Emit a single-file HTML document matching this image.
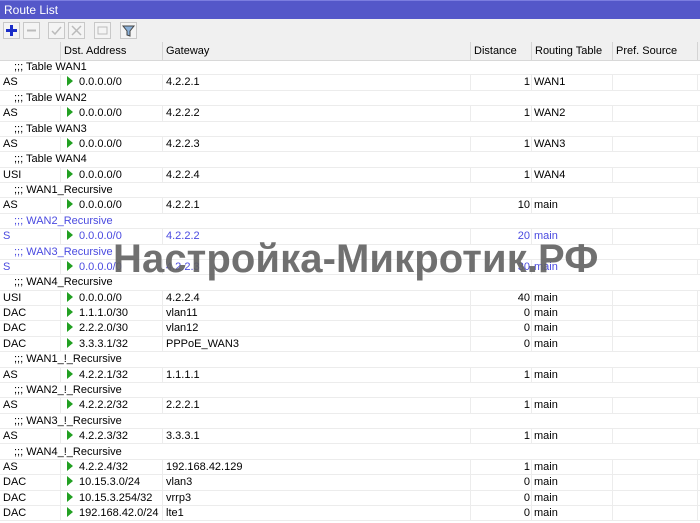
<!DOCTYPE html><html><head><meta charset="utf-8"><style>
body{margin:0;width:700px;height:523px;overflow:hidden;background:#fff;font-family:"Liberation Sans",sans-serif;font-size:11px;color:#000;position:relative}
.title{position:absolute;left:0;top:0;width:700px;height:19px;background:#5457c9;color:#fff;font-size:12px;line-height:19px;padding-left:4px;box-sizing:border-box;border-top:1px solid #7b7de0}
.tb{position:absolute;left:0;top:19px;width:700px;height:23px;background:#f0f0f0;border-bottom:1px solid #ddd}
.btn{position:absolute;top:3px;width:17px;height:17px;border:1px solid #c8c8c8;background:#f4f4f4;box-sizing:border-box}
.hdr{position:absolute;left:0;top:42px;width:700px;height:18px;background:#f0f0f0;border-bottom:1px solid #d8d8d8}
.hdr div{position:absolute;top:0;height:18px;line-height:18px;border-left:1px solid #d4d4d4;padding-left:3px;box-sizing:border-box}
.row{position:absolute;left:0;width:700px;height:15.38px;border-bottom:1px solid #ececec;box-sizing:border-box;line-height:15px}
.row span{position:absolute;top:0;white-space:nowrap}
.c{border-left:1px solid #ececec;height:15px}
.blue{color:#4a4ae0}
.tri{display:inline-block;width:0;height:0;border-left:6px solid #22a022;border-top:5px solid transparent;border-bottom:5px solid transparent;vertical-align:-1px;margin-right:6px}
.wm{position:absolute;left:113px;top:237px;font-size:40px;font-weight:bold;color:rgba(96,96,96,0.9);letter-spacing:0.1px;white-space:nowrap}
</style></head><body>
<div class="title">Route List</div>
<div class="tb">
<div class="btn" style="left:3px"><svg width="15" height="15"><path d="M7.5 2v11M2 7.5h11" stroke="#1a2cc8" stroke-width="3"/></svg></div>
<div class="btn" style="left:23px"><svg width="15" height="15"><path d="M3 7.5h9" stroke="#bbb" stroke-width="2"/></svg></div>
<div class="btn" style="left:48px"><svg width="15" height="15"><path d="M3 8l3 3 6-7" stroke="#bbb" stroke-width="1.5" fill="none"/></svg></div>
<div class="btn" style="left:68px"><svg width="15" height="15"><path d="M3 3l9 9M12 3l-9 9" stroke="#bbb" stroke-width="1.5"/></svg></div>
<div class="btn" style="left:94px"><svg width="15" height="15"><rect x="3" y="4" width="9" height="7" stroke="#bbb" fill="none"/></svg></div>
<div class="btn" style="left:120px"><svg width="15" height="15"><path d="M2 3h11l-4 5v5l-3-1V8z" stroke="#444" fill="#8ab0d8"/></svg></div>
</div>
<div class="hdr">
<div style="left:60px;width:102px">Dst. Address</div>
<div style="left:162px;width:308px">Gateway</div>
<div style="left:470px;width:61px">Distance</div>
<div style="left:531px;width:81px">Routing Table</div>
<div style="left:612px;width:85px">Pref. Source</div>
<div style="left:697px;width:10px"></div>
</div>
<div id="rows"></div>
<script>
var d=[
["c",";;; Table WAN1"],["r","AS","0.0.0.0/0","4.2.2.1","1","WAN1"],
["c",";;; Table WAN2"],["r","AS","0.0.0.0/0","4.2.2.2","1","WAN2"],
["c",";;; Table WAN3"],["r","AS","0.0.0.0/0","4.2.2.3","1","WAN3"],
["c",";;; Table WAN4"],["r","USI","0.0.0.0/0","4.2.2.4","1","WAN4"],
["c",";;; WAN1_Recursive"],["r","AS","0.0.0.0/0","4.2.2.1","10","main"],
["cb",";;; WAN2_Recursive"],["rb","S","0.0.0.0/0","4.2.2.2","20","main"],
["cb",";;; WAN3_Recursive"],["rb","S","0.0.0.0/0","4.2.2.3","30","main"],
["c",";;; WAN4_Recursive"],["r","USI","0.0.0.0/0","4.2.2.4","40","main"],
["r","DAC","1.1.1.0/30","vlan11","0","main"],["r","DAC","2.2.2.0/30","vlan12","0","main"],["r","DAC","3.3.3.1/32","PPPoE_WAN3","0","main"],
["c",";;; WAN1_!_Recursive"],["r","AS","4.2.2.1/32","1.1.1.1","1","main"],
["c",";;; WAN2_!_Recursive"],["r","AS","4.2.2.2/32","2.2.2.1","1","main"],
["c",";;; WAN3_!_Recursive"],["r","AS","4.2.2.3/32","3.3.3.1","1","main"],
["c",";;; WAN4_!_Recursive"],["r","AS","4.2.2.4/32","192.168.42.129","1","main"],
["r","DAC","10.15.3.0/24","vlan3","0","main"],["r","DAC","10.15.3.254/32","vrrp3","0","main"],["r","DAC","192.168.42.0/24","lte1","0","main"]];
var h="";
d.forEach(function(r,i){var t=60+i*15.38;var b=r[0].slice(-1)=="b"?" blue":"";
if(r[0][0]=="c"){h+='<div class="row'+b+'" style="top:'+t+'px"><span style="left:14px">'+r[1]+'</span></div>';}
else{h+='<div class="row'+b+'" style="top:'+t+'px"><span style="left:3px">'+r[1]+'</span><span class="c" style="left:60px;padding-left:6px"><i class="tri"></i>'+r[2]+'</span><span class="c" style="left:162px;padding-left:3px">'+r[3]+'</span><span class="c" style="left:470px;width:59px;text-align:right;padding-right:2px">'+r[4]+'</span><span class="c" style="left:531px;padding-left:2px">'+r[5]+'</span><span class="c" style="left:612px"></span><span class="c" style="left:697px"></span></div>';}
});
document.getElementById("rows").innerHTML=h;
</script>
<div class="wm">Настройка-Микротик.РФ</div>
</body></html>
